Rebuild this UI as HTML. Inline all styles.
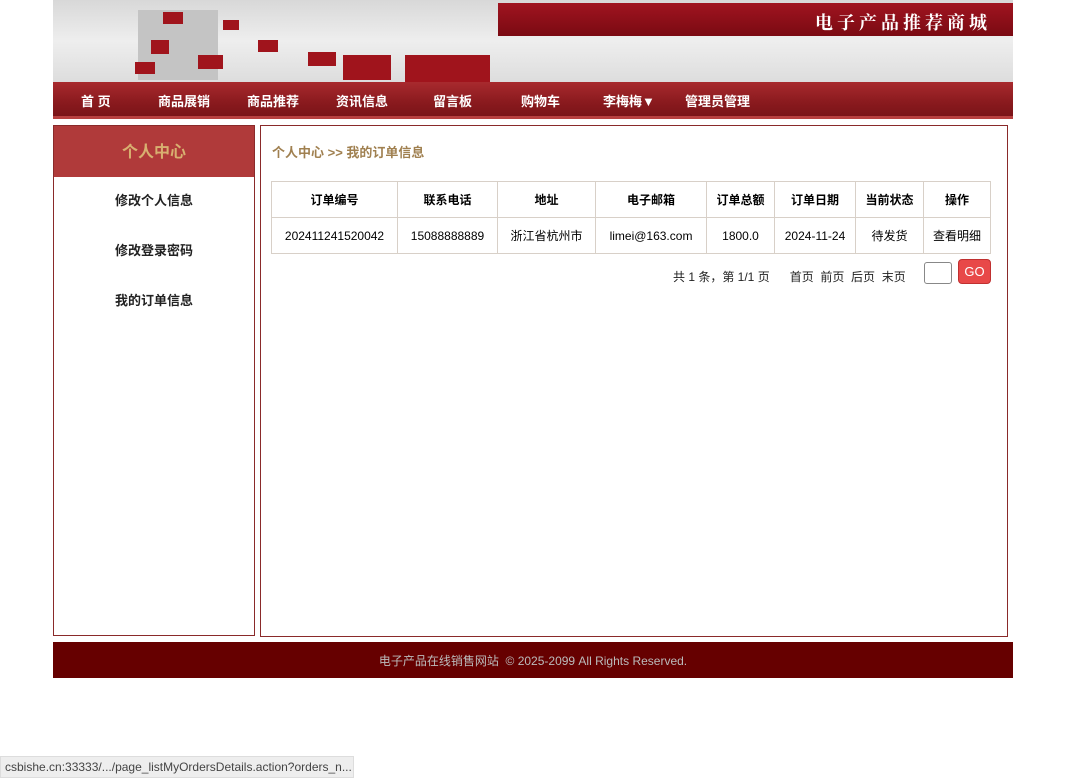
<!DOCTYPE html>
<html><head><meta charset="utf-8"><style>
*{margin:0;padding:0;box-sizing:border-box}
body{width:1066px;height:778px;background:#fff;font-family:"Liberation Sans","Noto Sans CJK SC",sans-serif;font-size:12px;color:#000;position:relative;overflow:hidden}
.hdr{position:absolute;left:53px;top:0;width:960px;height:82px;background:linear-gradient(180deg,#d8d8d8,#eee 50%,#ddd);overflow:hidden}
.ban{position:absolute;left:445px;top:3px;width:515px;height:33px;background:linear-gradient(180deg,#a01420,#7a0a12);}
.ban span{position:absolute;right:22px;top:6px;color:#fff;font-family:"Noto Serif CJK SC",serif;font-weight:bold;font-size:18px;letter-spacing:4px}
.cube{position:absolute;background:#a0141c}
.gc{position:absolute;background:#bbb}
.nav{position:absolute;left:53px;top:82px;width:960px;height:37px;background:linear-gradient(180deg,#a82a2e,#8a1a1e 60%,#7a1418);border-bottom:3px solid #b84040}
.nav span{position:absolute;top:9px;color:#fff;font-weight:bold;font-size:13px}
.side{position:absolute;left:53px;top:125px;width:202px;height:511px;border:1px solid #8a2a2a}
.side .t{height:51px;background:#b03a3a;color:#d8b070;font-weight:bold;font-size:16px;text-align:center;line-height:53px}
.side p{text-align:center;font-weight:bold;font-size:13px;color:#222;height:50px;line-height:48px}
.main{position:absolute;left:260px;top:125px;width:748px;height:512px;border:1px solid #8a2a2a}
.bc{position:absolute;left:11px;top:16px;color:#a08050;font-weight:bold;font-size:13px}
table{position:absolute;left:10px;top:55px;border-collapse:collapse;width:720px}
td{border:1px solid #d8d0c8;text-align:center;height:36px;font-size:12px}
tr:first-child td{font-weight:bold}
.pg{position:absolute;left:412px;top:142px;font-size:12px;color:#222}
.inp{position:absolute;left:663px;top:136px;width:28px;height:22px;border:1px solid #888;border-radius:3px}
.go{position:absolute;left:697px;top:133px;width:33px;height:25px;background:#e84848;border:1px solid #c03030;border-radius:4px;color:#fff;font-size:13px;text-align:center;line-height:23px}
.ft{position:absolute;left:53px;top:642px;width:960px;height:36px;background:#660000;color:#bbb;text-align:center;line-height:38px;font-size:12px}
.st{position:absolute;left:0;top:756px;width:354px;height:22px;background:#eee;border:1px solid #ddd;color:#444;font-size:12px;line-height:20px;padding-left:4px}
</style></head><body>
<div class="hdr">
<div class="gc" style="left:85px;top:10px;width:80px;height:70px;background:#c4c4c4"></div>
<div class="cube" style="left:110px;top:12px;width:20px;height:12px"></div>
<div class="cube" style="left:98px;top:40px;width:18px;height:14px"></div>
<div class="cube" style="left:170px;top:20px;width:16px;height:10px"></div>
<div class="cube" style="left:205px;top:40px;width:20px;height:12px"></div>
<div class="cube" style="left:145px;top:55px;width:25px;height:14px"></div>
<div class="cube" style="left:255px;top:52px;width:28px;height:14px"></div>
<div class="cube" style="left:290px;top:55px;width:48px;height:25px"></div>
<div class="cube" style="left:352px;top:55px;width:85px;height:27px"></div>
<div class="cube" style="left:82px;top:62px;width:20px;height:12px"></div>
<div class="ban"><span>电子产品推荐商城</span></div>
</div>
<div class="nav">
<span style="left:28px">首 页</span><span style="left:105px">商品展销</span><span style="left:194px">商品推荐</span><span style="left:283px">资讯信息</span><span style="left:380px">留言板</span><span style="left:468px">购物车</span><span style="left:550px">李梅梅▼</span><span style="left:632px">管理员管理</span>
</div>
<div class="side"><div class="t">个人中心</div><p>修改个人信息</p><p>修改登录密码</p><p>我的订单信息</p></div>
<div class="main">
<div class="bc">个人中心 &gt;&gt; 我的订单信息</div>
<table>
<tr><td style="width:126px">订单编号</td><td style="width:100px">联系电话</td><td style="width:98px">地址</td><td style="width:111px">电子邮箱</td><td style="width:68px">订单总额</td><td style="width:81px">订单日期</td><td style="width:68px">当前状态</td><td>操作</td></tr>
<tr><td>202411241520042</td><td>15088888889</td><td>浙江省杭州市</td><td>limei@163.com</td><td>1800.0</td><td>2024-11-24</td><td>待发货</td><td>查看明细</td></tr>
</table>
<div class="pg">共 1 条，第 1/1 页&nbsp;&nbsp;&nbsp;&nbsp;&nbsp; 首页&nbsp; 前页&nbsp; 后页&nbsp; 末页</div>
<div class="inp"></div><div class="go">GO</div>
</div>
<div class="ft">电子产品在线销售网站 &nbsp;© 2025-2099 All Rights Reserved.</div>
<div class="st">csbishe.cn:33333/.../page_listMyOrdersDetails.action?orders_n...</div>
</body></html>
